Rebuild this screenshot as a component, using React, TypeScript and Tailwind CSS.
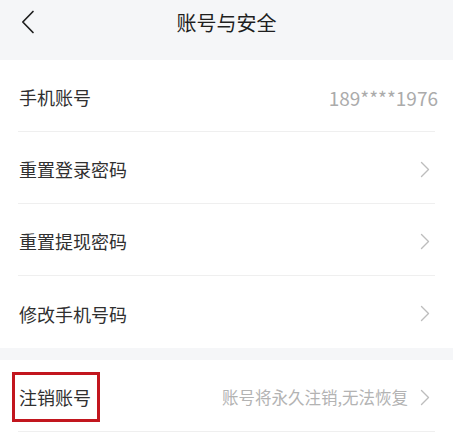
import React from "react";

const Chevron = () => (
  <svg width="10" height="17" viewBox="0 0 10 17" fill="none" className="shrink-0">
    <path d="M1.5 1.5 L8.5 8.5 L1.5 15.5" stroke="#bdbdbd" strokeWidth="1.4" strokeLinecap="round" strokeLinejoin="round" />
  </svg>
);

const Row = ({
  label,
  right,
  chevron = true,
  border = true,
  boxed = false,
}: {
  label: string;
  right?: React.ReactNode;
  chevron?: boolean;
  border?: boolean;
  boxed?: boolean;
}) => (
  <div
    className={`mx-[18px] h-[72px] flex items-center justify-between pt-[3px] ${
      border ? "border-b border-[#efefef]" : ""
    }`}
  >
    <span className="relative pl-[1px] text-[18px] text-[#303030] leading-none">
      {label}
      {boxed && (
        <span className="absolute -left-[6px] -right-[9px] -top-[16px] -bottom-[16px] border-[3px] border-[#c2161e]" />
      )}
    </span>
    <div className="flex items-center gap-[12px] pr-[5px]">
      {right}
      {chevron && <Chevron />}
    </div>
  </div>
);

export default function App() {
  return (
    <div
      className="w-[453px] h-[432px] bg-white overflow-hidden"
      style={{ fontFamily: '"Noto Sans CJK SC", "Noto Sans", sans-serif' }}
    >
      <div className="h-[60px] bg-[#f5f6f8] pb-[17px] grid grid-cols-[1fr_auto_1fr] items-center">
        <div className="pl-[21px] flex items-center">
          <svg width="14" height="24" viewBox="0 0 14 24" fill="none">
            <path d="M12 1.5 L1.8 12 L12 22.5" stroke="#1f1f1f" strokeWidth="1.7" strokeLinecap="round" strokeLinejoin="round" />
          </svg>
        </div>
        <div className="text-[20px] text-[#1f1f1f] leading-none pt-[2px]">账号与安全</div>
        <div />
      </div>
      <Row
        label="手机账号"
        chevron={false}
        right={<span className="text-[19px] text-[#ababab] leading-none -mr-[8px]">189****1976</span>}
      />
      <Row label="重置登录密码" />
      <Row label="重置提现密码" />
      <Row label="修改手机号码" border={false} />
      <div className="h-[12px] bg-[#f5f6f8]" />
      <Row
        label="注销账号"
        boxed
        right={<span className="text-[16.5px] text-[#b3b3b3] leading-none">账号将永久注销,无法恢复</span>}
      />
    </div>
  );
}
